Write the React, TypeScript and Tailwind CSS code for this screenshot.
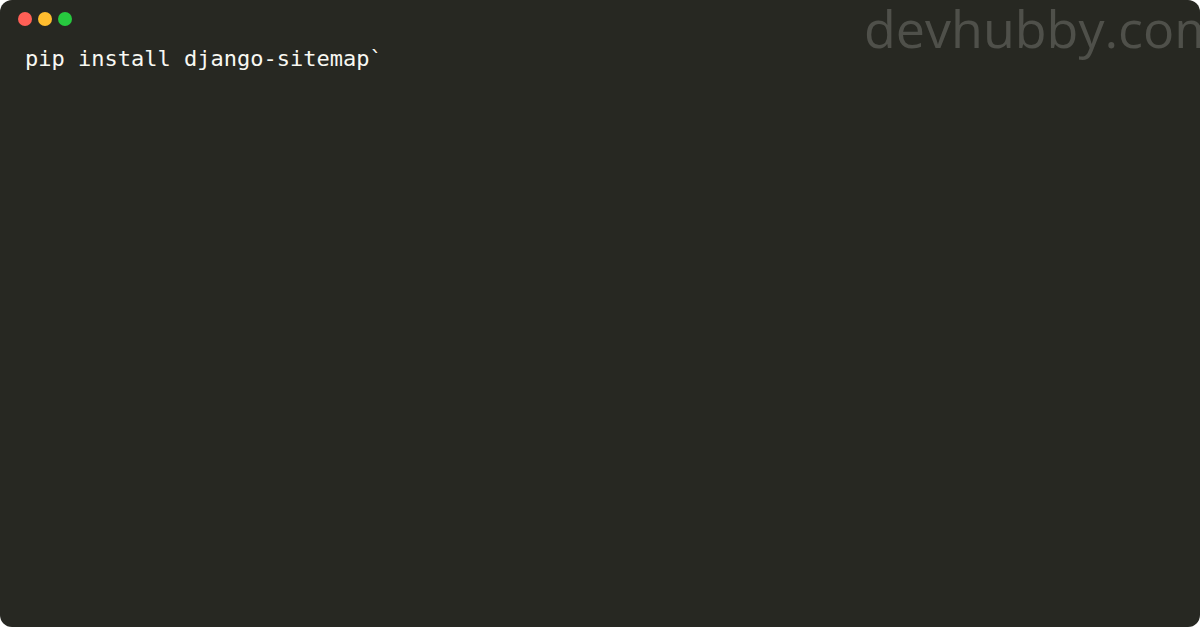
export default function App() {
  return (
    <div className="w-[1200px] h-[627px] bg-white">
      <div className="relative w-full h-full rounded-[12px] bg-[#272822] overflow-hidden">
        {/* watermark */}
        <span
          className="absolute left-[864px] top-[2px] whitespace-nowrap text-[52px] leading-none text-[#4f504a]"
          style={{ fontFamily: '"Open Sans", "Noto Sans", sans-serif' }}
        >
          devhubby.com
        </span>

        <div className="flex flex-col pt-3 pl-[18px]">
          <div className="flex gap-[6px]">
            <span className="w-[14px] h-[14px] rounded-full bg-[#ff5f56]" />
            <span className="w-[14px] h-[14px] rounded-full bg-[#ffbd2e]" />
            <span className="w-[14px] h-[14px] rounded-full bg-[#27c93f]" />
          </div>
          <pre
            className="mt-[22px] pl-[7px] text-[22px] leading-[22px] text-[#f8f8f2]"
            style={{ fontFamily: '"DejaVu Sans Mono", monospace' }}
          >
            pip install django-sitemap`
          </pre>
        </div>
      </div>
    </div>
  );
}
